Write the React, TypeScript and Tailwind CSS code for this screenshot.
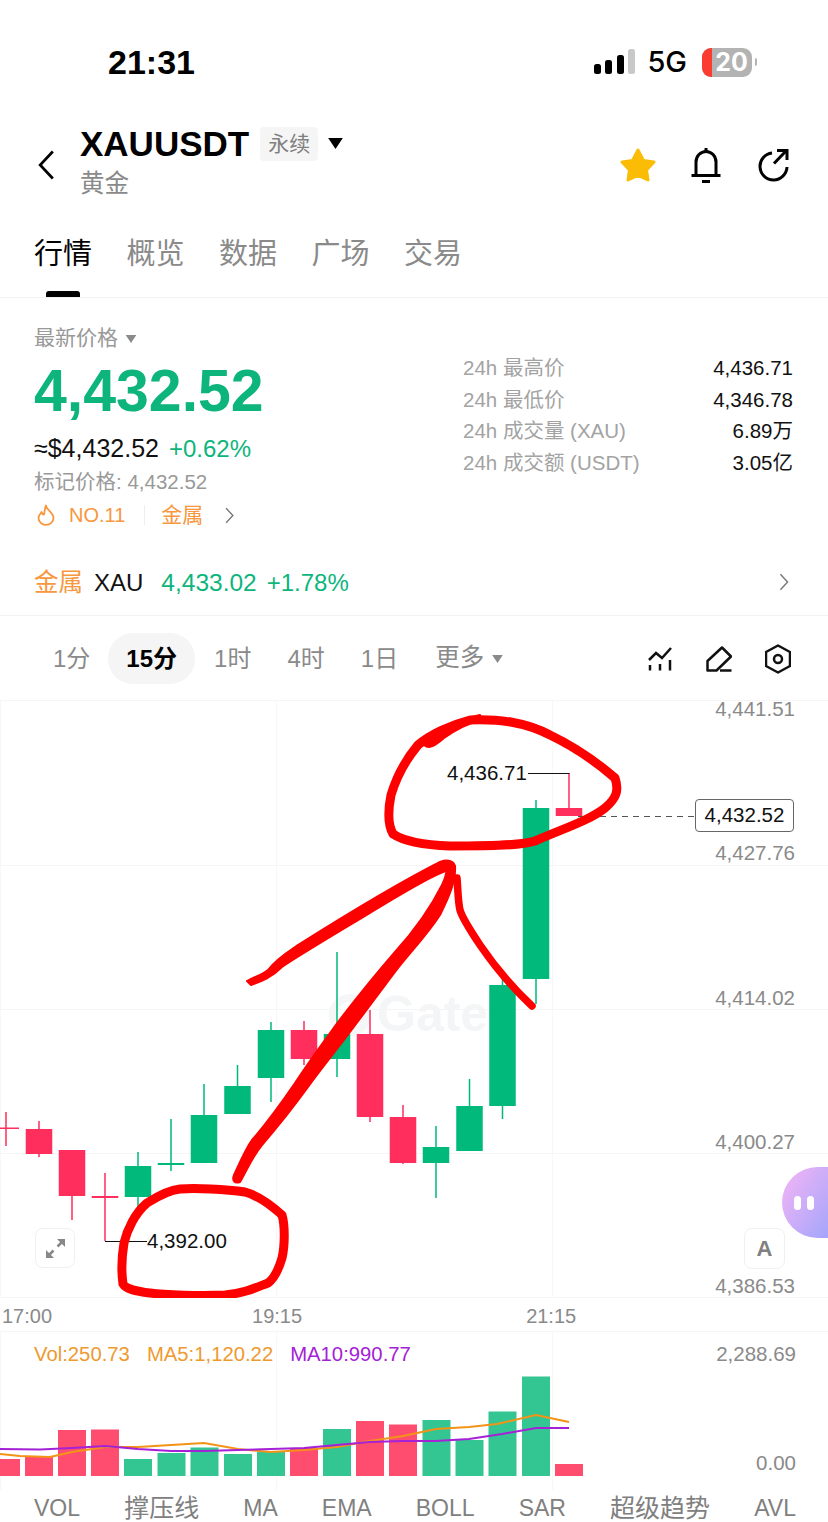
const RED = "#ff2e5c";
const GREEN = "#00b97a";

type Candle = { x: number; top: number; bottom: number; hi: number; lo: number; up: boolean };

const candles: Candle[] = [
  { x: 6, top: 1127.5, bottom: 1129, hi: 1112, lo: 1146, up: false },
  { x: 39, top: 1129, bottom: 1154, hi: 1121, lo: 1157, up: false },
  { x: 72, top: 1150, bottom: 1196, hi: 1150, lo: 1220, up: false },
  { x: 105, top: 1196, bottom: 1198, hi: 1173, lo: 1241, up: false },
  { x: 138, top: 1166, bottom: 1197, hi: 1152, lo: 1215, up: true },
  { x: 171, top: 1163, bottom: 1165, hi: 1119, lo: 1171, up: true },
  { x: 204, top: 1115, bottom: 1163, hi: 1084, lo: 1163, up: true },
  { x: 237.5, top: 1086, bottom: 1114, hi: 1065, lo: 1114, up: true },
  { x: 271, top: 1030, bottom: 1078, hi: 1022, lo: 1102, up: true },
  { x: 304, top: 1030, bottom: 1059, hi: 1021, lo: 1065, up: false },
  { x: 337, top: 1034, bottom: 1059, hi: 952, lo: 1077, up: true },
  { x: 370, top: 1034, bottom: 1117, hi: 1010, lo: 1122, up: false },
  { x: 403, top: 1117, bottom: 1163, hi: 1105, lo: 1164, up: false },
  { x: 436, top: 1147, bottom: 1163, hi: 1126, lo: 1198, up: true },
  { x: 469.5, top: 1106, bottom: 1151, hi: 1079, lo: 1151, up: true },
  { x: 502.5, top: 985, bottom: 1106, hi: 978, lo: 1119, up: true },
  { x: 536, top: 808, bottom: 979, hi: 800, lo: 1004, up: true },
  { x: 569, top: 808, bottom: 816, hi: 773, lo: 816, up: false },
];

const volumes: [number, number, boolean][] = [
  [-8, 1459, false], [25, 1457, false], [58, 1430, false], [91, 1429.5, false],
  [124, 1459, true], [157.5, 1453, true], [190.5, 1447.5, true], [224, 1454, true],
  [257, 1452, true], [290, 1448, false], [323, 1429, true], [356, 1421, false],
  [389, 1424.5, false], [422.5, 1420, true], [455.5, 1440, true], [488.5, 1411.5, true],
  [522, 1376.5, true], [555, 1464, false],
];

const ma5 =
  "0,1454 20,1456 50,1457 72,1452 105,1447 138,1447 171,1445 204,1443 238,1449 271,1452 304,1450 337,1447 370,1441 403,1436 436,1429 469,1427 497,1424 536,1415 569,1422";
const ma10 =
  "0,1449 40,1449.5 72,1448 105,1446 138,1449 171,1451 204,1451 238,1450 271,1449 304,1448 337,1445 370,1442 403,1441 436,1441 469,1439 502,1434 536,1428 569,1428";

const hGrid = [700, 865, 1009, 1153, 1297];
const vGrid = [276, 552];

function Chevron({ className }: { className: string }) {
  return (
    <svg viewBox="0 0 12 20" className={className} fill="none" stroke="currentColor" strokeWidth="1.6">
      <path d="M2 1.5 L10 10 L2 18.5" />
    </svg>
  );
}

function BackChevron({ className }: { className: string }) {
  return (
    <svg viewBox="0 0 12 20" className={className} fill="none" stroke="currentColor" strokeWidth="1.7">
      <path d="M10 1.5 L2 10 L10 18.5" />
    </svg>
  );
}

function Caret({ className }: { className: string }) {
  return (
    <svg viewBox="0 0 12 9" className={className} fill="currentColor">
      <path d="M0 0 H12 L6 9 Z" />
    </svg>
  );
}

function StatRow({ label, value }: { label: string; value: string }) {
  return (
    <div className="flex h-[31.5px] items-center justify-between">
      <span className="text-[20.500px] text-[#a3a3a3]">{label}</span>
      <span className="text-[20.500px] text-[#111]">{value}</span>
    </div>
  );
}

function Scribble() {
  return (
    <g fill="#ff0000" stroke="#ff0000" strokeLinecap="round" strokeLinejoin="round">
      <path
        fill="none"
        strokeWidth="9"
        d="M470 720 C500 719 525 722 550 735 C575 747 600 765 615 778 C619 790 617 798 605 808 C590 820 565 828 535 841 C520 846 480 846 450 846 C425 845 405 842 393 834 C388 825 388 810 391 795 C397 775 408 757 418 745 C430 735 450 725 470 720"
      />
      <path strokeWidth="2" d="M424 745 C426 737 432 731 445 726 C458 721 470 717 480 715 L481 720 C466 724 455 730 444 738 C436 745 428 750 424 745Z" />
      <path strokeWidth="2" d="M247 981 C254 977 262 975 268 970 C274 962 280 957 295 947 C330 925 385 890 440 862 C448 859 455 861 455 868 C440 871 410 888 350 925 C320 943 295 958 282 967 C272 977 262 981 251 985Z" />
      <path strokeWidth="2" d="M455 866 C456 880 450 895 440 915 C425 938 410 952 395 972 C380 992 365 1012 350 1032 C335 1052 320 1070 308 1087 C295 1105 275 1130 262 1145 C252 1157 247 1170 240 1182 C234 1184 232 1180 234 1175 C240 1162 246 1148 252 1140 C265 1125 280 1105 295 1083 C310 1060 325 1040 338 1022 C355 1000 375 975 395 952 C415 930 432 905 442 885 C447 875 448 868 445 862Z" />
      <path
        fill="none"
        strokeWidth="7.500"
        d="M457 878 C458 890 458 902 460 910 C462 918 470 930 480 945 C495 967 515 990 532 1006"
      />
      <path
        fill="none"
        strokeWidth="9"
        d="M180 1189 C195 1188 225 1189 245 1192 C260 1196 272 1206 282 1215 C285 1225 285 1245 282 1258 C279 1268 275 1278 268 1283 C255 1288 245 1293 225 1295 C200 1296 165 1295 150 1293 C135 1291 126 1289 123 1284 C121 1270 122 1255 124 1243 C127 1230 135 1213 147 1203 C158 1196 170 1190 180 1189Z"
      />
    </g>
  );
}

export default function App() {
  return (
    <div className="relative h-[1522px] w-[828px] overflow-hidden bg-white font-['Liberation_Sans','Noto_Sans_CJK_SC',sans-serif] text-[#111]">
      {/* Status bar */}
      <div className="flex h-[126px] items-start justify-between pl-[108px] pr-[71px] pt-[41px]">
        <span className="text-[34px] font-bold leading-[42px] text-black">21:31</span>
        <div className="flex items-center pt-[6px]">
          <svg width="41" height="26" viewBox="594 49 41 26" className="mr-[12px]">
            <rect x="594" y="64" width="7" height="10" rx="2.5" fill="#000" />
            <rect x="605" y="60" width="7" height="14" rx="2.5" fill="#000" />
            <rect x="617" y="55" width="7" height="19" rx="2.5" fill="#000" />
            <rect x="628" y="49" width="7" height="25" rx="2.5" fill="#c9c9c9" />
          </svg>
          <span className="mr-[15px] font-['Inter'] text-[29px] font-medium leading-[30px] text-black">5G</span>
          <div className="relative flex h-[29px] w-[50px] items-center justify-center overflow-hidden rounded-[9px] bg-[#b3b3b3]">
            <div className="absolute inset-y-0 left-0 w-[10px] bg-[#fb3c30]" />
            <span className="relative pl-[9px] font-['Inter'] text-[25px] font-bold leading-[29px] text-white">20</span>
          </div>
          <div className="ml-[3px] h-[8px] w-[2px] rounded-r-full bg-[#b3b3b3]" />
        </div>
      </div>

      {/* Header */}
      <div className="flex h-[99px] items-start pl-[37px] pr-[38px]">
        <BackChevron className="mt-[23px] h-[32px] w-[19px] text-black" />
        <div className="ml-[24px] flex flex-col">
          <div className="flex items-center">
            <span className="mt-[1px] text-[35px] font-bold leading-[34px] text-black">XAUUSDT</span>
            <span className="ml-[11px] flex h-[34px] w-[58px] items-center justify-center rounded-[4px] bg-[#f5f5f5] text-[21px] text-[#808080]">
              永续
            </span>
            <Caret className="ml-[10px] h-[11px] w-[15px] text-black" />
          </div>
          <span className="mt-[10px] text-[24.500px] leading-[26px] text-[#8a8a8a]">黄金</span>
        </div>
        <div className="ml-auto mt-[21px] flex items-center">
          <svg width="38" height="36" viewBox="0 0 38 36">
            <path
              d="M19 3 L24.5 13.5 L35 15 L27.5 23 L29 33 L19 28.5 L9 33 L10.5 23 L3 15 L13.5 13.5 Z"
              fill="#fbbc05"
              stroke="#fbbc05"
              strokeWidth="3"
              strokeLinejoin="round"
            />
          </svg>
          <svg width="32" height="36" viewBox="0 0 32 36" className="ml-[33px]" fill="none" stroke="#000" strokeWidth="3">
            <path d="M16 1 V5" />
            <path d="M6 28 V15 A10 10.500 0 0 1 26 15 V28" />
            <path d="M1.500 28.500 H30.500" />
            <path d="M12 34.500 H20" />
          </svg>
          <svg width="33" height="34" viewBox="0 0 33 34" className="ml-[35px]" fill="none" stroke="#000" strokeWidth="3">
            <path d="M15 5 A13.500 13.500 0 1 0 30 19" />
            <path d="M17 15.500 L29 3" />
            <path d="M20 2.500 H30 V12" />
          </svg>
        </div>
      </div>

      {/* Tabs */}
      <div className="flex h-[73px] gap-[34.500px] border-b border-[#f2f2f2] px-[34px]">
        {["行情", "概览", "数据", "广场", "交易"].map((t, i) => (
          <div key={t} className="flex flex-col justify-between pt-[14px]">
            <span className={i === 0 ? "text-[29px] leading-[30px] text-black" : "text-[29px] leading-[30px] text-[#8a8a8a]"}>
              {t}
            </span>
            {i === 0 ? (
              <div className="h-[6px] w-[34px] self-center rounded-t-[3px] bg-black" />
            ) : (
              <div className="h-[6px]" />
            )}
          </div>
        ))}
      </div>

      {/* Price stats */}
      <div className="flex h-[262px] justify-between pl-[34px] pr-[35px]">
        <div className="flex flex-col pt-[28px]">
          <div className="flex items-center">
            <span className="text-[21px] leading-[24px] text-[#999]">最新价格</span>
            <Caret className="ml-[7px] mt-[2px] h-[8px] w-[12px] text-[#8a8a8a]" />
          </div>
          <span className="mt-[11px] text-[59px] font-bold leading-[60px] text-[#0db57c]">4,432.52</span>
          <div className="mt-[12px] flex items-baseline">
            <span className="text-[25px] leading-[30px] text-[#111]">≈$4,432.52</span>
            <span className="ml-[10px] text-[24px] leading-[30px] text-[#0db57c]">+0.62%</span>
          </div>
          <span className="mt-[4px] text-[20.500px] leading-[28px] text-[#999]">标记价格: 4,432.52</span>
          <div className="mt-[7px] flex items-center">
            <svg width="18" height="22" viewBox="0 0 18 22" className="ml-[3px]" fill="none" stroke="#f7973e" strokeWidth="1.8" strokeLinejoin="round">
              <path d="M9 1.500 C9.500 6 16.500 9 16.500 14 A7.500 6.800 0 0 1 1.500 14 C1.500 11.500 3.500 9.500 4.500 8 C5 10 6 10.500 7 10.500 C8 7 7.500 4 9 1.500 Z" />
            </svg>
            <span className="ml-[14px] text-[20px] leading-[24px] text-[#f7973e]">NO.11</span>
            <div className="ml-[19px] h-[20px] w-px bg-[#eeeeee]" />
            <span className="ml-[16px] text-[21px] leading-[24px] text-[#f7973e]">金属</span>
            <Chevron className="ml-[21px] h-[17px] w-[11px] text-[#777]" />
          </div>
        </div>
        <div className="w-[330px] pt-[55px]">
          <StatRow label="24h 最高价" value="4,436.71" />
          <StatRow label="24h 最低价" value="4,346.78" />
          <StatRow label="24h 成交量 (XAU)" value="6.89万" />
          <StatRow label="24h 成交额 (USDT)" value="3.05亿" />
        </div>
      </div>

      {/* Sector row */}
      <div className="flex h-[56px] items-start border-b border-[#f2f2f2] pl-[34px] pr-[38px]">
        <span className="text-[24.500px] leading-[46px] text-[#f7973e]">金属</span>
        <span className="ml-[11px] text-[24px] leading-[46px] text-[#111]">XAU</span>
        <span className="ml-[18px] text-[24.500px] leading-[46px] text-[#0db57c]">4,433.02</span>
        <span className="ml-[10px] text-[24px] leading-[46px] text-[#0db57c]">+1.78%</span>
        <Chevron className="ml-auto mt-[13px] h-[18px] w-[12px] text-[#777]" />
      </div>

      {/* Interval row */}
      <div className="flex h-[84px] items-center pl-[35px] pr-[37px] pt-[1px]">
        {["1分", "15分", "1时", "4时", "1日"].map((t, i) => (
          <span
            key={t}
            className={
              i === 1
                ? "mr-[1px] flex h-[51px] items-center rounded-[25px] bg-[#f5f5f5] px-[18px] text-[24px] font-bold text-black"
                : "flex h-[51px] items-center px-[18px] text-[24px] text-[#8a8a8a]"
            }
          >
            {t}
          </span>
        ))}
        <span className="flex items-center pl-[19px] text-[24.500px] text-[#8a8a8a]">
          更多
          <Caret className="ml-[8px] h-[8px] w-[11px] text-[#8a8a8a]" />
        </span>
        <div className="ml-auto flex items-center gap-[33px]">
          <svg width="26" height="26" viewBox="646 644 26 26" fill="none" stroke="#111" strokeWidth="2.500">
            <path d="M648 658 L655 651 L661 656 L670 646" />
            <path d="M649 663 V668.500 M659 662 V668.500 M669 658 V668.500" />
          </svg>
          <svg width="26" height="26" viewBox="706 644 26 26" fill="none" stroke="#111" strokeWidth="2.500" strokeLinejoin="round">
            <path d="M707.500 668.500 V659 L722 645.500 L731 654.500 L716.500 668.500 Z" />
            <path d="M720 668.500 H731.500" />
          </svg>
          <svg width="26" height="30" viewBox="765 643 26 30" fill="none" stroke="#111" strokeWidth="2.500" strokeLinejoin="round">
            <path d="M778 644.500 L790 651 V665 L778 671.500 L766 665 V651 Z" />
            <circle cx="778" cy="658" r="4" />
          </svg>
        </div>
      </div>

      {/* Main chart */}
      <div className="relative h-[598px]">
        <div className="absolute left-[377px] top-[286px] text-[50px] font-bold leading-[56px] text-[#f4f5f6]">Gate</div>
        <svg width="828" height="598" viewBox="0 700 828 598" className="absolute left-0 top-0">
          <circle cx="350" cy="1015" r="17" fill="none" stroke="#f5f6f7" strokeWidth="8" />
          {hGrid.map((y) => (
            <path key={y} d={`M0 ${y + 0.5} H828`} stroke="#f5f5f5" />
          ))}
          {vGrid.map((x) => (
            <path key={x} d={`M${x + 0.5} 700 V1298`} stroke="#f7f7f7" />
          ))}
          <path d="M0.500 700 V1298" stroke="#f7f7f7" />
          {candles.map((c) => {
            const color = c.up ? GREEN : RED;
            return (
              <g key={c.x} fill={color}>
                <rect x={c.x - 0.75} y={c.hi} width="1.5" height={c.lo - c.hi} />
                <rect x={c.x === 6 ? -7 : c.x - 13.25} y={c.top} width={c.x === 6 ? 26 : 26.5} height={c.bottom - c.top} />
              </g>
            );
          })}
          <path d="M105 1241.500 H147" stroke="#111" strokeWidth="1.200" />
          <path d="M528 773.500 H569.500" stroke="#111" strokeWidth="1.200" />
          <path d="M578 816.500 H695" stroke="#555" strokeWidth="1.200" strokeDasharray="6 5" />
          <Scribble />
        </svg>

        <span className="absolute left-[447px] top-[61px] text-[20.500px] leading-[24px] text-[#111]">4,436.71</span>
        <span className="absolute left-[147px] top-[529px] text-[20.500px] leading-[24px] text-[#111]">4,392.00</span>
        <span className="absolute left-[695px] top-[99px] flex h-[33px] w-[99px] items-center justify-center rounded-[4px] border border-[#666] bg-white text-[20.500px] text-[#111]">
          4,432.52
        </span>

        <div className="absolute bottom-[0px] right-[33px] top-[-3px] flex flex-col items-end justify-between text-[20.500px] leading-[24px] text-[#8a8a8a]">
          <span>4,441.51</span>
          <span>4,427.76</span>
          <span>4,414.02</span>
          <span>4,400.27</span>
          <span>4,386.53</span>
        </div>

        <div className="absolute left-[35px] top-[528px] flex h-[40px] w-[40px] items-center justify-center rounded-[8px] border border-[#f0f0f0] bg-white">
          <svg width="21" height="21" viewBox="0 0 21 21" fill="#888">
            <path d="M12 1 H20 V9 Z M1 12 V20 H9 Z" />
            <path d="M3.500 17.500 L8.500 12.500 M17.500 3.500 L12.500 8.500" stroke="#888" strokeWidth="2.500" />
          </svg>
        </div>
        <div className="absolute left-[744px] top-[528px] flex h-[41px] w-[41px] items-center justify-center rounded-[8px] border border-[#f0f0f0] bg-white text-[22px] font-bold text-[#808080]">
          A
        </div>
        <div className="absolute left-[782px] top-[467px] flex h-[71px] w-[46px] items-center gap-[6px] rounded-l-[36px] bg-gradient-to-br from-[#f6b4f5] to-[#a3a5fb] pl-[12px]">
          <div className="h-[14px] w-[7px] rounded-full bg-white" />
          <div className="h-[14px] w-[7px] rounded-full bg-white" />
        </div>
      </div>

      {/* Time axis */}
      <div className="flex h-[33px] items-center pl-[2px] pt-[3px] text-[20px] text-[#8a8a8a]">
        <span>17:00</span>
        <span className="ml-[200px]">19:15</span>
        <span className="ml-[224px]">21:15</span>
      </div>

      {/* Volume panel */}
      <div className="relative h-[159px] border-t border-[#f5f5f5]">
        <svg width="828" height="158" viewBox="0 1332 828 158" className="absolute left-0 top-0">
          <path d="M276.500 1332 V1490 M552.500 1332 V1490 M0.500 1332 V1490" stroke="#f7f7f7" />
          {volumes.map(([x, top, up]) => (
            <rect key={x} x={x} y={top} width="28" height={1476 - top} fill={up ? "#34c692" : "#ff4d70"} />
          ))}
          <polyline points={ma5} fill="none" stroke="#f39318" strokeWidth="2" strokeLinejoin="round" />
          <polyline points={ma10} fill="none" stroke="#a521d6" strokeWidth="2" strokeLinejoin="round" />
        </svg>
        <div className="absolute left-[34px] top-[10px] flex gap-[17px] text-[20.300px] leading-[24px]">
          <span className="text-[#ee9a30]">Vol:250.73</span>
          <span className="text-[#ee9a30]">MA5:1,120.22</span>
          <span className="text-[#a521d6]">MA10:990.77</span>
        </div>
        <div className="absolute right-[32px] top-[10px] flex h-[133px] flex-col items-end justify-between text-[20.500px] leading-[24px] text-[#8a8a8a]">
          <span>2,288.69</span>
          <span>0.00</span>
        </div>
      </div>

      {/* Indicator tabs */}
      <div className="flex h-[36px] items-center justify-between pl-[34px] pr-[32px] text-[23px] leading-[30px] text-[#808080]">
        {["VOL", "撑压线", "MA", "EMA", "BOLL", "SAR", "超级趋势", "AVL"].map((t, i) => (
          <span key={t} className={i === 1 || i === 6 ? "text-[25px]" : ""}>
            {t}
          </span>
        ))}
      </div>
    </div>
  );
}
